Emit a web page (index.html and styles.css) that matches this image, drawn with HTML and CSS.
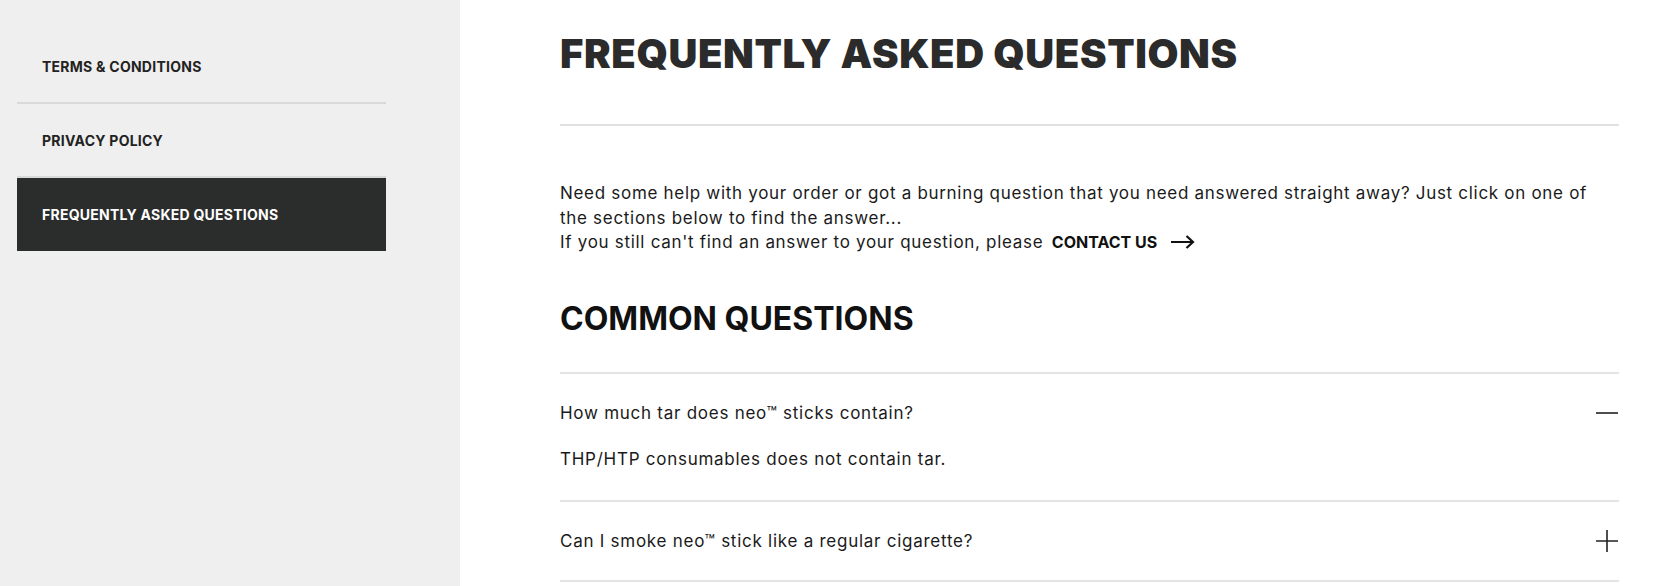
FILE: index.html
```html
<!DOCTYPE html>
<html lang="en">
<head>
<meta charset="utf-8">
<title>Frequently Asked Questions</title>
<link rel="stylesheet" href="styles.css">
</head>
<body>
<div class="page">
  <aside class="sidebar">
    <nav class="side-nav">
      <a class="side-link" href="#">TERMS &amp; CONDITIONS</a>
      <a class="side-link" href="#">PRIVACY POLICY</a>
      <a class="side-link is-active" href="#">FREQUENTLY ASKED QUESTIONS</a>
    </nav>
  </aside>
  <main class="content">
    <h1 class="page-title">FREQUENTLY ASKED QUESTIONS</h1>
    <hr class="rule">
    <p class="intro">Need some help with your order or got a burning question that you need answered straight away? Just click on one of the sections below to find the answer...<br>If you still can't find an answer to your question, please <a class="contact" href="#">CONTACT US <svg class="arrow" width="25" height="14" viewBox="0 0 25 14"><path d="M1 7H23M16.5 1L23 7L16.5 13" fill="none" stroke="#111" stroke-width="2.2"/></svg></a></p>
    <h2 class="section-title">COMMON QUESTIONS</h2>
    <div class="faq">
      <div class="faq-item is-open">
        <div class="faq-q"><span>How much tar does neo™ sticks contain?</span><svg class="toggle" width="22" height="22" viewBox="0 0 22 22"><path d="M0 11H22" stroke="#222" stroke-width="1.6"/></svg></div>
        <div class="faq-a">THP/HTP consumables does not contain tar.</div>
      </div>
      <div class="faq-item">
        <div class="faq-q"><span>Can I smoke neo™ stick like a regular cigarette?</span><svg class="toggle" width="22" height="22" viewBox="0 0 22 22"><path d="M0 11H22M11 0V22" stroke="#222" stroke-width="1.6"/></svg></div>
      </div>
    </div>
  </main>
</div>
</body>
</html>
```
FILE: styles.css
```css
* { box-sizing: border-box; }
html, body { margin: 0; padding: 0; }
body {
  font-family: Inter, "Liberation Sans", sans-serif;
  color: #1a1a1a;
  background: #fff;
}
.page {
  display: flex;
  min-height: 100vh;
}
.sidebar {
  width: 460px;
  flex: none;
  background: #efefef;
  padding: 30px 0 0 17px;
}
.side-nav {
  width: 369px;
  display: flex;
  flex-direction: column;
}
.side-link {
  display: flex;
  align-items: center;
  height: 74px;
  padding-left: 25px;
  border-bottom: 2px solid #d9d9d9;
  font-size: 14px;
  font-weight: 700;
  letter-spacing: 0.25px;
  color: #222;
  text-decoration: none;
}
.side-link.is-active {
  height: 73px;
  border-bottom: none;
  background: #2b2d2c;
  color: #fff;
}
.content {
  flex: 1;
  padding: 30px 47px 0 100px;
}
.page-title {
  margin: 0;
  font-size: 40px;
  line-height: 48px;
  font-weight: 900;
  letter-spacing: 0.6px;
  color: #2b2b2b;
}
.rule {
  margin: 46px 0 0;
  border: 0;
  height: 2px;
  background: #e0e0e0;
}
.intro {
  margin: 55px 0 0;
  font-size: 17px;
  line-height: 24.5px;
  letter-spacing: 0.7px;
  color: #1a1a1a;
}
.contact {
  display: inline-flex;
  align-items: center;
  gap: 13px;
  margin-left: 3px;
  font-size: 16px;
  font-weight: 700;
  letter-spacing: 0;
  color: #111;
  text-decoration: none;
}
.arrow { display: block; }
.section-title {
  margin: 44px 0 0;
  font-size: 32px;
  line-height: 40px;
  font-weight: 700;
  color: #111;
}
.faq {
  margin-top: 33px;
  border-top: 2px solid #e4e4e4;
}
.faq-item {
  border-bottom: 2px solid #e4e4e4;
}
.faq-q {
  display: flex;
  justify-content: space-between;
  align-items: center;
  padding: 27px 1px 27px 0;
  font-size: 17px;
  line-height: 24px;
  letter-spacing: 0.74px;
  color: #1a1a1a;
}
.faq-item.is-open .faq-q {
  padding-bottom: 22px;
}
.toggle { display: block; flex: none; }
.faq-a {
  padding-bottom: 29px;
  font-size: 17px;
  line-height: 24px;
  letter-spacing: 0.74px;
  color: #1a1a1a;
}
```
